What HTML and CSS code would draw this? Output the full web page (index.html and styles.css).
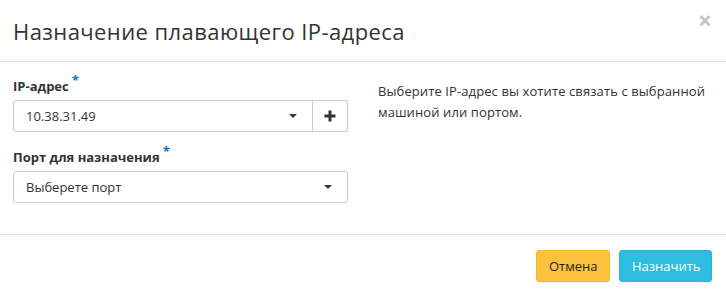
FILE: index.html
```html
<!DOCTYPE html>
<html>
<head>
<meta charset="utf-8">
<link rel="stylesheet" href="styles.css">
</head>
<body>
<div class="modal">
  <div class="modal-header">
    <h3 class="title">Назначение плавающего IP-адреса</h3>
    <span class="close"><svg width="12" height="13" viewBox="0 0 12 13"><path d="M1.5 2l9 9.5M10.5 2l-9 9.5" stroke="#c6c6c6" stroke-width="3" stroke-linecap="butt"/></svg></span>
  </div>
  <div class="modal-body">
    <div class="left">
      <div class="group">
        <label class="label">IP-адрес<span class="req">*</span></label>
        <div class="input-group">
          <div class="select">
            <span>10.38.31.49</span>
            <span class="caret"></span>
          </div>
          <div class="addon">
            <svg width="12" height="12" viewBox="0 0 12 12"><path d="M4.5 0.5h3v4h4v3h-4v4h-3v-4h-4v-3h4z" fill="#333"/></svg>
          </div>
        </div>
      </div>
      <div class="group">
        <label class="label">Порт для назначения<span class="req">*</span></label>
        <div class="select single">
          <span>Выберете порт</span>
          <span class="caret"></span>
        </div>
      </div>
    </div>
    <div class="right">
      <p class="help">Выберите IP-адрес вы хотите связать с выбранной машиной или портом.</p>
    </div>
  </div>
  <div class="modal-footer">
    <button class="btn btn-cancel">Отмена</button>
    <button class="btn btn-primary">Назначить</button>
  </div>
</div>
</body>
</html>
```

FILE: styles.css
```css
* { box-sizing: border-box; }
html, body { margin: 0; padding: 0; background: #fff; }
body { font-family: "Open Sans", sans-serif; color: #333; font-size: 13px; }
.modal { width: 726px; height: 297px; }
.modal-header {
  height: 62px;
  border-bottom: 1px solid #e5e5e5;
  padding: 14px 15px 0 13px;
  display: flex;
  justify-content: space-between;
  align-items: flex-start;
}
.title {
  margin: 0;
  font-size: 22px;
  font-weight: 400;
  line-height: 34px;
  letter-spacing: 0.42px;
  color: #333;
}
.close {
  display: block;
  margin-top: 0;
  height: 13px;
}
.close svg { display: block; }
.modal-body {
  display: flex;
  padding: 14px 15px 0 13px;
  height: 173px;
  border-bottom: 1px solid #e5e5e5;
}
.left { width: 335px; }
.right { padding-left: 30px; flex: 1; }
.group { margin-bottom: 15px; }
.label {
  display: block;
  font-weight: 700;
  font-size: 13px;
  line-height: 20px;
  margin-bottom: 4px;
}
.req { color: #0e72c9; font-size: 13px; vertical-align: 6px; margin-left: 3px; line-height: 0; }
.input-group { display: flex; height: 32px; }
.select {
  flex: 1;
  height: 32px;
  border: 1px solid #ccc;
  border-radius: 3px 0 0 3px;
  display: flex;
  align-items: center;
  justify-content: space-between;
  padding: 0 15px 0 12px;
  font-size: 13px;
  color: #333;
}
.select.single { border-radius: 3px; width: 335px; flex: none; }
.caret {
  width: 0; height: 0;
  border-left: 4px solid transparent;
  border-right: 4px solid transparent;
  border-top: 4px solid #333;
}
.addon {
  width: 35px;
  height: 32px;
  border: 1px solid #ccc;
  border-left: none;
  border-radius: 0 3px 3px 0;
  display: flex;
  align-items: center;
  justify-content: center;
}
.help {
  margin: 5px 0 0 0;
  font-size: 13px;
  line-height: 21px;
  letter-spacing: 0.1px;
  color: #333;
}
.modal-footer {
  display: flex;
  justify-content: flex-end;
  padding: 15px 14px 0 0;
  gap: 9px;
}
.btn {
  font-family: "Open Sans", sans-serif;
  font-size: 13px;
  height: 32px;
  border-radius: 3px;
  padding: 0 12px;
  cursor: pointer;
}
.btn-cancel { background: #fcc13d; border: 1px solid #f5b82e; color: #222; width: 74px; }
.btn-primary { background: #2dbde0; border: 1px solid #2ab6d8; color: #fff; width: 93px; }
```
